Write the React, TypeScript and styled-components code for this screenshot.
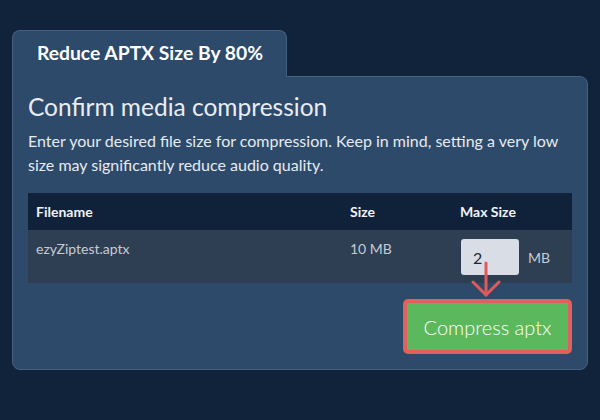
import styled, { createGlobalStyle } from "styled-components";

const GlobalStyle = createGlobalStyle`
  html, body {
    margin: 0;
    padding: 0;
    background-color: #11233a;
    font-family: Lato, "Open Sans", "Liberation Sans", sans-serif;
  }
`;

const Page = styled.div`
  width: 600px;
  height: 420px;
  padding: 30px 12px 0;
  box-sizing: border-box;
`;

const Tab = styled.div`
  position: relative;
  z-index: 1;
  width: 275px;
  height: 47px;
  box-sizing: border-box;
  margin-bottom: -1px;
  padding: 11px 0 0 24px;
  background-color: #2d4a6b;
  border: 1px solid #46607f;
  border-bottom: none;
  border-radius: 8px 8px 0 0;
  color: #ffffff;
  font-size: 19.3px;
  font-weight: 700;
  line-height: 22px;
`;

const Panel = styled.section`
  height: 294px;
  box-sizing: border-box;
  padding: 15px;
  background-color: #2d4a6b;
  border: 1px solid #46607f;
  border-radius: 0 8px 8px 8px;
  color: #e8ecf1;
`;

const Heading = styled.h2`
  margin: 0 0 8px;
  font-size: 24.5px;
  font-weight: 400;
  line-height: 29px;
  color: #e9edf2;
`;

const Intro = styled.p`
  margin: 0 0 16px;
  font-size: 16px;
  line-height: 24px;
  color: #e6eaef;
`;

const Table = styled.table`
  width: 100%;
  border-collapse: collapse;
  font-size: 14px;
`;

const HeadCell = styled.th<{ $w?: number }>`
  width: ${(p) => (p.$w ? `${p.$w}px` : "auto")};
  height: 37px;
  padding: 0 8px;
  box-sizing: border-box;
  background-color: #10223a;
  color: #f1f3f6;
  font-weight: 700;
  text-align: left;
`;

const Cell = styled.td`
  height: 53px;
  padding: 9px 8px 0;
  box-sizing: border-box;
  background-color: #2e3f54;
  color: #c6cbd3;
  vertical-align: top;
  line-height: 20px;
`;

const SizeCell = styled.td`
  padding: 9px 8px 8px 9px;
  background-color: #2e3f54;
  color: #c6cbd3;
`;

const SizeField = styled.div`
  display: flex;
  align-items: center;
  gap: 9px;
`;

const SizeInput = styled.input`
  width: 58px;
  height: 36px;
  box-sizing: border-box;
  padding: 0 12px;
  border: none;
  border-radius: 3px;
  background-color: #d8dde6;
  color: #1d2838;
  font-family: inherit;
  font-size: 16px;
`;

const Unit = styled.span`
  font-size: 14px;
  color: #c6cbd3;
`;

const Actions = styled.div`
  position: relative;
  display: flex;
  justify-content: flex-end;
  margin-top: 16px;
`;

const Hint = styled.svg`
  position: absolute;
  right: 70px;
  top: -38px;
`;

const CompressButton = styled.button`
  width: 169px;
  height: 55px;
  box-sizing: border-box;
  border: 4px solid #e0605d;
  border-radius: 5px;
  background-color: #5cb85c;
  color: #ffffff;
  font-family: inherit;
  font-size: 20px;
  font-weight: 300;
  cursor: pointer;
`;

export default function App() {
  return (
    <Page>
      <GlobalStyle />
      <Tab>Reduce APTX Size By 80%</Tab>
      <Panel>
        <Heading>Confirm media compression</Heading>
        <Intro>
          Enter your desired file size for compression. Keep in mind, setting a very low
          size may significantly reduce audio quality.
        </Intro>
        <Table>
          <thead>
            <tr>
              <HeadCell $w={314}>Filename</HeadCell>
              <HeadCell $w={110}>Size</HeadCell>
              <HeadCell>Max Size</HeadCell>
            </tr>
          </thead>
          <tbody>
            <tr>
              <Cell>ezyZiptest.aptx</Cell>
              <Cell>10 MB</Cell>
              <SizeCell>
                <SizeField>
                  <SizeInput defaultValue="2" />
                  <Unit>MB</Unit>
                </SizeField>
              </SizeCell>
            </tr>
          </tbody>
        </Table>
        <Actions>
          <Hint width="32" height="38" viewBox="0 0 32 38">
            <g stroke="#e05a5a" strokeWidth="3" fill="none" strokeLinecap="round" strokeLinejoin="round">
              <line x1="16" y1="2" x2="16" y2="34" />
              <polyline points="3,21 16,34 29,21" />
            </g>
          </Hint>
          <CompressButton>Compress aptx</CompressButton>
        </Actions>
      </Panel>
    </Page>
  );
}
